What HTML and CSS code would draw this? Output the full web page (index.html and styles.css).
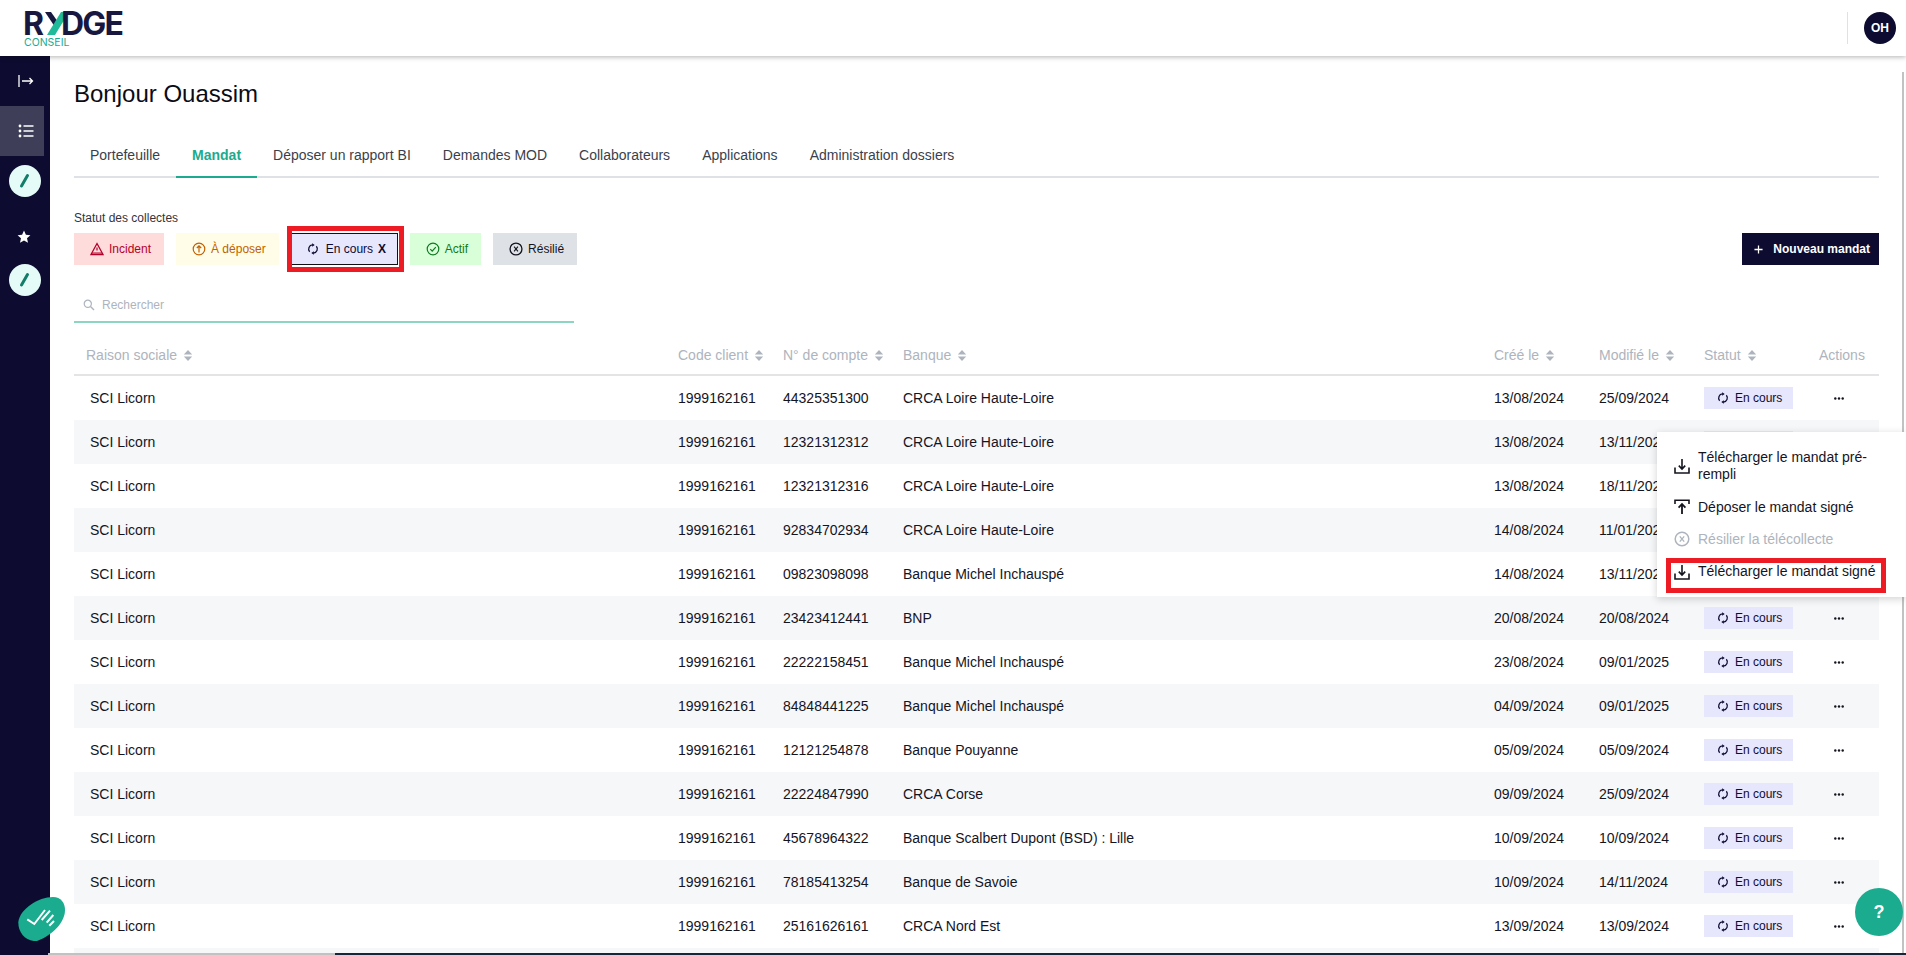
FILE: index.html
```html
<!DOCTYPE html>
<html lang="fr">
<head>
<meta charset="utf-8">
<title>Rydge Conseil</title>
<link rel="stylesheet" href="styles.css">
</head>
<body>
<svg class="sprite" aria-hidden="true">
  <defs>
    <symbol id="i-sync" viewBox="0 0 14 14"><path d="M3.100 10.200A4.800 4.800 0 0 1 6.400 2.300M10.900 3.800A4.800 4.800 0 0 1 7.600 11.700" fill="none" stroke="currentColor" stroke-width="1.500"/><path d="M6 .2 9 2.300 6 4.400ZM8 9.600 5 11.700 8 13.800Z" fill="currentColor"/></symbol>
    <symbol id="i-sort" viewBox="0 0 10 14"><path d="M5 1 9.500 5.800H.5ZM5 13 .5 8.200H9.500Z" fill="currentColor"/></symbol>
    <symbol id="i-dots" viewBox="0 0 10 3"><circle cx="1.300" cy="1.500" r="1.200" fill="currentColor"/><circle cx="5" cy="1.500" r="1.200" fill="currentColor"/><circle cx="8.700" cy="1.500" r="1.200" fill="currentColor"/></symbol>
    <symbol id="i-dl" viewBox="0 0 16 16"><path d="M1 9.500V15H15V9.500" fill="none" stroke="currentColor" stroke-width="1.600"/><path d="M8 1V10.500M4.800 7.600 8 11 11.200 7.600" fill="none" stroke="currentColor" stroke-width="1.600"/></symbol>
    <symbol id="i-ul" viewBox="0 0 16 16"><path d="M1 5V1.200H15V5" fill="none" stroke="currentColor" stroke-width="1.600"/><path d="M8 15V5.500M4.600 8.600 8 5 11.400 8.600" fill="none" stroke="currentColor" stroke-width="1.800"/></symbol>
    <symbol id="i-x" viewBox="0 0 16 16"><circle cx="8" cy="8" r="6.800" fill="none" stroke="currentColor" stroke-width="1.500"/><path d="M5.800 5.400 10.200 10.600M10.200 5.400 5.800 10.600" stroke="currentColor" stroke-width="1.300"/></symbol>
    <symbol id="i-leaf" viewBox="0 0 32 32"><circle cx="16" cy="16" r="16" fill="#e5fbf8"/><path d="M12.500 21 18.500 10.500" stroke="#127d68" stroke-width="3" stroke-linecap="round"/></symbol>
  </defs>
</svg>

<header class="topbar">
  <svg class="logo" viewBox="0 0 100 36" role="img" aria-label="Rydge Conseil">
    <text class="logo-word" x="-1" y="23">R</text>
    <path class="logo-dark" d="M21 0H27L34 10 31 15Z"/>
    <path class="logo-green" d="M23 23 37 0H45L31 23Z"/>
    <text class="logo-word logo-rest" x="37" y="23">DGE</text>
    <text class="logo-sub" x="0" y="34">CONSEIL</text>
  </svg>
  <div class="user">
    <span class="avatar">OH</span>
  </div>
</header>

<div class="shell">
  <nav class="sidebar">
    <a class="side-item"><svg class="side-icon" viewBox="0 0 16 14"><path d="M1 1V13M4 7H14.500M11.500 4 14.500 7 11.500 10" fill="none" stroke="#fff" stroke-width="1.300"/></svg></a>
    <a class="side-item side-active"><svg class="side-icon" viewBox="0 0 16 14"><circle cx="2" cy="2" r="1.400" fill="#fff"/><circle cx="2" cy="7" r="1.400" fill="#fff"/><circle cx="2" cy="12" r="1.400" fill="#fff"/><path d="M5.500 2H15.500M5.500 7H15.500M5.500 12H15.500" stroke="#fff" stroke-width="1.500"/></svg></a>
    <svg class="side-round"><use href="#i-leaf"/></svg>
    <svg class="side-star" viewBox="0 0 14 14"><path d="M7 .6 8.900 4.800 13.400 5.300 10 8.300 11 12.800 7 10.500 3 12.800 4 8.300 .6 5.300 5.100 4.800Z" fill="#fff"/></svg>
    <svg class="side-round side-round-last"><use href="#i-leaf"/></svg>
  </nav>

  <main class="main">
    <h1 class="title">Bonjour Ouassim</h1>

    <div class="tabs">
      <a class="tab">Portefeuille</a>
      <a class="tab tab-active">Mandat</a>
      <a class="tab">Déposer un rapport BI</a>
      <a class="tab">Demandes MOD</a>
      <a class="tab">Collaborateurs</a>
      <a class="tab">Applications</a>
      <a class="tab">Administration dossiers</a>
    </div>

    <div class="filter-label">Statut des collectes</div>
    <div class="filters">
      <div class="chips">
        <span class="chip chip-incident"><svg class="chip-icon" viewBox="0 0 14 14"><path d="M7 1.500 13 12.500H1Z" fill="none" stroke="currentColor" stroke-width="1.300"/><path d="M2.500 10H11.500L12.500 12.500H1.500Z" fill="currentColor" opacity=".5"/><path d="M7 5.500V8.500" stroke="currentColor" stroke-width="1.200"/></svg>Incident</span>
        <span class="chip chip-depot"><svg class="chip-icon" viewBox="0 0 14 14"><circle cx="7" cy="7" r="5.800" fill="none" stroke="currentColor" stroke-width="1.200"/><path d="M7 10.500V4M4.800 6 7 3.800 9.200 6" fill="none" stroke="currentColor" stroke-width="1.200"/></svg>À déposer</span>
        <span class="chip chip-cours chip-selected"><svg class="chip-icon chip-icon-sync"><use href="#i-sync"/></svg>En cours<b class="chip-x">X</b><span class="mark mark-chip"></span></span>
        <span class="chip chip-actif"><svg class="chip-icon" viewBox="0 0 14 14"><circle cx="7" cy="7" r="5.800" fill="none" stroke="currentColor" stroke-width="1.200"/><path d="M4.300 7.200 6.200 9.200 9.800 5.200" fill="none" stroke="currentColor" stroke-width="1.200"/></svg>Actif</span>
        <span class="chip chip-resilie"><svg class="chip-icon"><use href="#i-x"/></svg>Résilié</span>
      </div>
      <button class="new-btn"><svg class="plus" viewBox="0 0 10 10"><path d="M5 .5V9.500M.5 5H9.500" stroke="#fff" stroke-width="1.400"/></svg>Nouveau mandat</button>
    </div>

    <div class="search">
      <svg class="search-icon" viewBox="0 0 12 12"><circle cx="4.800" cy="4.800" r="3.600" fill="none" stroke="currentColor" stroke-width="1.200"/><path d="M7.500 7.500 11 11" stroke="currentColor" stroke-width="1.400"/></svg>
      <span>Rechercher</span>
    </div>

    <table class="grid">
      <colgroup>
        <col class="c-name"><col class="c-code"><col class="c-acc"><col class="c-bank"><col class="c-created"><col class="c-mod"><col class="c-status"><col class="c-actions">
      </colgroup>
      <thead>
        <tr>
          <th>Raison sociale<svg class="sort"><use href="#i-sort"/></svg></th>
          <th>Code client<svg class="sort"><use href="#i-sort"/></svg></th>
          <th>N° de compte<svg class="sort"><use href="#i-sort"/></svg></th>
          <th>Banque<svg class="sort"><use href="#i-sort"/></svg></th>
          <th>Créé le<svg class="sort"><use href="#i-sort"/></svg></th>
          <th>Modifié le<svg class="sort"><use href="#i-sort"/></svg></th>
          <th>Statut<svg class="sort"><use href="#i-sort"/></svg></th>
          <th class="th-actions">Actions</th>
        </tr>
      </thead>
      <tbody>
        <tr><td>SCI Licorn</td><td>1999162161</td><td>44325351300</td><td>CRCA Loire Haute-Loire</td><td>13/08/2024</td><td>25/09/2024</td><td><span class="badge"><svg class="badge-icon"><use href="#i-sync"/></svg>En cours</span></td><td class="dots"><svg class="dots-icon"><use href="#i-dots"/></svg></td></tr>
        <tr><td>SCI Licorn</td><td>1999162161</td><td>12321312312</td><td>CRCA Loire Haute-Loire</td><td>13/08/2024</td><td>13/11/2024</td><td><span class="badge"><svg class="badge-icon"><use href="#i-sync"/></svg>En cours</span></td><td class="dots"><svg class="dots-icon"><use href="#i-dots"/></svg></td></tr>
        <tr><td>SCI Licorn</td><td>1999162161</td><td>12321312316</td><td>CRCA Loire Haute-Loire</td><td>13/08/2024</td><td>18/11/2024</td><td><span class="badge"><svg class="badge-icon"><use href="#i-sync"/></svg>En cours</span></td><td class="dots"><svg class="dots-icon"><use href="#i-dots"/></svg></td></tr>
        <tr><td>SCI Licorn</td><td>1999162161</td><td>92834702934</td><td>CRCA Loire Haute-Loire</td><td>14/08/2024</td><td>11/01/2025</td><td><span class="badge"><svg class="badge-icon"><use href="#i-sync"/></svg>En cours</span></td><td class="dots"><svg class="dots-icon"><use href="#i-dots"/></svg></td></tr>
        <tr><td>SCI Licorn</td><td>1999162161</td><td>09823098098</td><td>Banque Michel Inchauspé</td><td>14/08/2024</td><td>13/11/2024</td><td><span class="badge"><svg class="badge-icon"><use href="#i-sync"/></svg>En cours</span></td><td class="dots"><svg class="dots-icon"><use href="#i-dots"/></svg></td></tr>
        <tr><td>SCI Licorn</td><td>1999162161</td><td>23423412441</td><td>BNP</td><td>20/08/2024</td><td>20/08/2024</td><td><span class="badge"><svg class="badge-icon"><use href="#i-sync"/></svg>En cours</span></td><td class="dots"><svg class="dots-icon"><use href="#i-dots"/></svg></td></tr>
        <tr><td>SCI Licorn</td><td>1999162161</td><td>22222158451</td><td>Banque Michel Inchauspé</td><td>23/08/2024</td><td>09/01/2025</td><td><span class="badge"><svg class="badge-icon"><use href="#i-sync"/></svg>En cours</span></td><td class="dots"><svg class="dots-icon"><use href="#i-dots"/></svg></td></tr>
        <tr><td>SCI Licorn</td><td>1999162161</td><td>84848441225</td><td>Banque Michel Inchauspé</td><td>04/09/2024</td><td>09/01/2025</td><td><span class="badge"><svg class="badge-icon"><use href="#i-sync"/></svg>En cours</span></td><td class="dots"><svg class="dots-icon"><use href="#i-dots"/></svg></td></tr>
        <tr><td>SCI Licorn</td><td>1999162161</td><td>12121254878</td><td>Banque Pouyanne</td><td>05/09/2024</td><td>05/09/2024</td><td><span class="badge"><svg class="badge-icon"><use href="#i-sync"/></svg>En cours</span></td><td class="dots"><svg class="dots-icon"><use href="#i-dots"/></svg></td></tr>
        <tr><td>SCI Licorn</td><td>1999162161</td><td>22224847990</td><td>CRCA Corse</td><td>09/09/2024</td><td>25/09/2024</td><td><span class="badge"><svg class="badge-icon"><use href="#i-sync"/></svg>En cours</span></td><td class="dots"><svg class="dots-icon"><use href="#i-dots"/></svg></td></tr>
        <tr><td>SCI Licorn</td><td>1999162161</td><td>45678964322</td><td>Banque Scalbert Dupont (BSD) : Lille</td><td>10/09/2024</td><td>10/09/2024</td><td><span class="badge"><svg class="badge-icon"><use href="#i-sync"/></svg>En cours</span></td><td class="dots"><svg class="dots-icon"><use href="#i-dots"/></svg></td></tr>
        <tr><td>SCI Licorn</td><td>1999162161</td><td>78185413254</td><td>Banque de Savoie</td><td>10/09/2024</td><td>14/11/2024</td><td><span class="badge"><svg class="badge-icon"><use href="#i-sync"/></svg>En cours</span></td><td class="dots"><svg class="dots-icon"><use href="#i-dots"/></svg></td></tr>
        <tr><td>SCI Licorn</td><td>1999162161</td><td>25161626161</td><td>CRCA Nord Est</td><td>13/09/2024</td><td>13/09/2024</td><td><span class="badge"><svg class="badge-icon"><use href="#i-sync"/></svg>En cours</span></td><td class="dots"><svg class="dots-icon"><use href="#i-dots"/></svg></td></tr>
        <tr><td colspan="8"></td></tr>
      </tbody>
    </table>
  </main>
  <div class="scrollbar"></div>
</div>

<div class="menu">
  <a class="menu-item"><svg class="menu-icon"><use href="#i-dl"/></svg><span>Télécharger le mandat pré-rempli</span></a>
  <a class="menu-item menu-second"><svg class="menu-icon"><use href="#i-ul"/></svg><span>Déposer le mandat signé</span></a>
  <a class="menu-item menu-disabled"><svg class="menu-icon"><use href="#i-x"/></svg><span>Résilier la télécollecte</span></a>
  <a class="menu-item menu-marked"><svg class="menu-icon"><use href="#i-dl"/></svg><span>Télécharger le mandat signé</span><span class="mark mark-menu"></span></a>
</div>

<svg class="bubble" viewBox="0 0 47 44">
  <path d="M.3 25C2 12 20 0 35 0 43 0 47 6 47 13 47 25 35 38 19 44 8 45 0 36 .3 25Z" fill="#1bab8e"/>
  <path d="M9.300 22.300 16.300 27 27 13M23.700 23 32 13.700M28.700 25.700 35.300 18M31.300 28.700 36 24" fill="none" stroke="#fff" stroke-width="2"/>
</svg>
<div class="help">?</div>
<div class="bottom-line"></div>
</body>
</html>
```

FILE: styles.css
```css
* { box-sizing: border-box; }
html, body { margin: 0; height: 100%; overflow: hidden; }
body {
  font-family: "Liberation Sans", Arial, sans-serif;
  font-size: 14px;
  color: #14141f;
  background: #fff;
  position: relative;
}
.sprite { position: absolute; width: 0; height: 0; }

.topbar {
  height: 56px;
  display: flex;
  align-items: center;
  justify-content: space-between;
  padding: 0 10px 0 24px;
  background: #fff;
  box-shadow: 0 1px 5px rgba(0, 0, 0, .3);
  position: relative;
  z-index: 2;
}
.logo { width: 100px; height: 36px; margin-top: 4px; overflow: visible; }
.logo-word { font-family: Inter, sans-serif; font-weight: 700; font-size: 32px; fill: #17173f; letter-spacing: -1px; }
.logo-rest { letter-spacing: -1.800px; }
.logo-sub { font-family: Inter, sans-serif; font-size: 10.500px; fill: #1bab8e; }
.logo-dark { fill: #17173f; }
.logo-green { fill: #1fba9a; }
.user { display: flex; align-items: center; height: 32px; border-left: 1px solid #dee2e6; padding-left: 16px; }
.avatar {
  width: 32px; height: 32px; border-radius: 50%;
  background: #0d0c30; color: #fff;
  font-size: 12px; font-weight: 700;
  display: flex; align-items: center; justify-content: center;
}

.shell { display: flex; height: 899px; }
.sidebar { width: 50px; flex: none; background: #0d0c30; display: flex; flex-direction: column; align-items: flex-start; }
.side-item { width: 50px; height: 50px; display: flex; align-items: center; padding-left: 18px; }
.side-active { width: 44px; background: #3e3e59; }
.side-icon { width: 16px; height: 14px; }
.side-round { width: 32px; height: 32px; margin: 9px 0 0 9px; flex: none; }
.side-star { width: 14px; height: 14px; margin: 33px 0 0 17px; flex: none; }
.side-round-last { margin-top: 20px; }

.main { flex: 1; min-width: 0; padding: 22px 23px 0 24px; overflow: hidden; }
.title { margin: 0; font-size: 24px; line-height: 32px; font-weight: 400; color: #0b0b14; }

.tabs { display: flex; margin-top: 24px; border-bottom: 2px solid #dee2e6; height: 44px; }
.tab { height: 44px; padding: 0 16px; line-height: 42px; color: #3b3f4a; }
.tab-active { color: #1bab8e; font-weight: 700; border-bottom: 2px solid #1bab8e; }

.filter-label { margin-top: 33px; font-size: 12px; line-height: 14px; color: #33333d; }
.filters { display: flex; justify-content: space-between; margin-top: 8px; }
.chips { display: flex; gap: 12px; }
.chip { height: 32px; display: flex; align-items: center; gap: 5px; padding: 0 13px 0 16px; font-size: 12px; position: relative; white-space: nowrap; }
.chip-icon { width: 14px; height: 14px; flex: none; }
.chip-icon-sync { width: 12px; height: 12px; }
.chip-incident { background: #ffdcdc; color: #b3002a; }
.chip-depot { background: #fffde8; color: #c25f00; }
.chip-cours { background: #e6e6fd; color: #0d0c30; }
.chip-actif { background: #d9ffd9; color: #0e7a1f; }
.chip-resilie { background: #dee1e6; color: #14141f; }
.chip-selected { border: 1px solid #111; padding: 0 0 0 15px; gap: 7px; width: 107px; }
.chip-x { font-weight: 700; margin-left: -2px; }
.mark { position: absolute; border: 5px solid #ed1c24; }
.mark-chip { top: -8px; bottom: -8px; left: -5px; right: -7px; }
.mark-menu { top: 0; bottom: 0; left: 0; right: 0; }

.new-btn {
  height: 32px; border: 0; background: #0d0c30; color: #fff;
  font: 700 12px "Liberation Sans", Arial, sans-serif;
  display: flex; align-items: center; gap: 10px; padding: 0 9px 0 12px;
}
.plus { width: 9px; height: 9px; }

.search {
  width: 500px; height: 41px; margin-top: 17px;
  border-bottom: 2px solid #8dd5c3;
  display: flex; align-items: center; gap: 7px; padding: 7px 0 0 9px;
  font-size: 12px; color: #aeb4bd;
}
.search-icon { width: 12px; height: 12px; }

.grid { width: 1805px; margin-top: 9px; border-collapse: separate; border-spacing: 0; table-layout: fixed; }
.c-name { width: 592px; }
.c-code { width: 105px; }
.c-acc { width: 120px; }
.c-bank { width: 591px; }
.c-created { width: 105px; }
.c-mod { width: 105px; }
.c-status { width: 102px; }
.c-actions { width: 85px; }
th { height: 44px; padding: 4px 0 0 12px; text-align: left; font-weight: 400; color: #aeb4bd; border-bottom: 2px solid #e3e4e6; white-space: nowrap; }
.th-actions { padding-left: 25px; }
.sort { width: 10px; height: 13px; margin-left: 6px; vertical-align: -2px; color: #aeb4bd; }
td { height: 44px; padding: 0 0 0 12px; color: #14141f; white-space: nowrap; }
td:first-child { padding-left: 16px; }
tbody tr:nth-child(even) td { background: #f6f7f9; }
.badge { display: inline-flex; align-items: center; gap: 6px; width: 89px; height: 22px; padding-left: 13px; background: #e6e6fd; color: #0d0c30; font-size: 12px; vertical-align: middle; }
.badge-icon { width: 12px; height: 12px; flex: none; }
td.dots { padding-left: 40px; line-height: 0; }
.dots-icon { width: 10px; height: 3px; color: #14141f; position: relative; top: -1px; }

.scrollbar { width: 4px; flex: none; margin-top: 16px; border-left: 2px solid #c2c2c2; }

.menu {
  position: absolute; left: 1657px; top: 432px; width: 249px; height: 165px;
  background: #fff; box-shadow: 0 2px 8px rgba(0, 0, 0, .18);
  padding: 9px 9px 4px 9px;
  display: flex; flex-direction: column; z-index: 3;
}
.menu-item { display: flex; align-items: center; gap: 8px; padding: 0 8px; line-height: 17px; color: #14141f; position: relative; height: 32px; width: 220px; flex: none; }
.menu-item:first-child { height: 49px; }
.menu-second { margin-top: 1px; }
.menu-item.menu-marked { height: 35px; margin-top: 3px; padding-bottom: 8px; }
.menu-icon { width: 16px; height: 16px; flex: none; }
.menu-disabled { color: #aeb4bd; }

.bubble { position: absolute; left: 18px; top: 897px; width: 47px; height: 44px; z-index: 3; }
.help {
  position: absolute; left: 1855px; top: 888px; width: 48px; height: 48px; border-radius: 50%;
  background: #1bab8e; color: #fff; font-weight: 700; font-size: 18px;
  display: flex; align-items: center; justify-content: center; z-index: 3;
}
.bottom-line { position: absolute; left: 48px; right: 0; bottom: 0; height: 2px; background: linear-gradient(90deg, #c2c2c2 0 287px, #16253a 287px); z-index: 2; }
```
